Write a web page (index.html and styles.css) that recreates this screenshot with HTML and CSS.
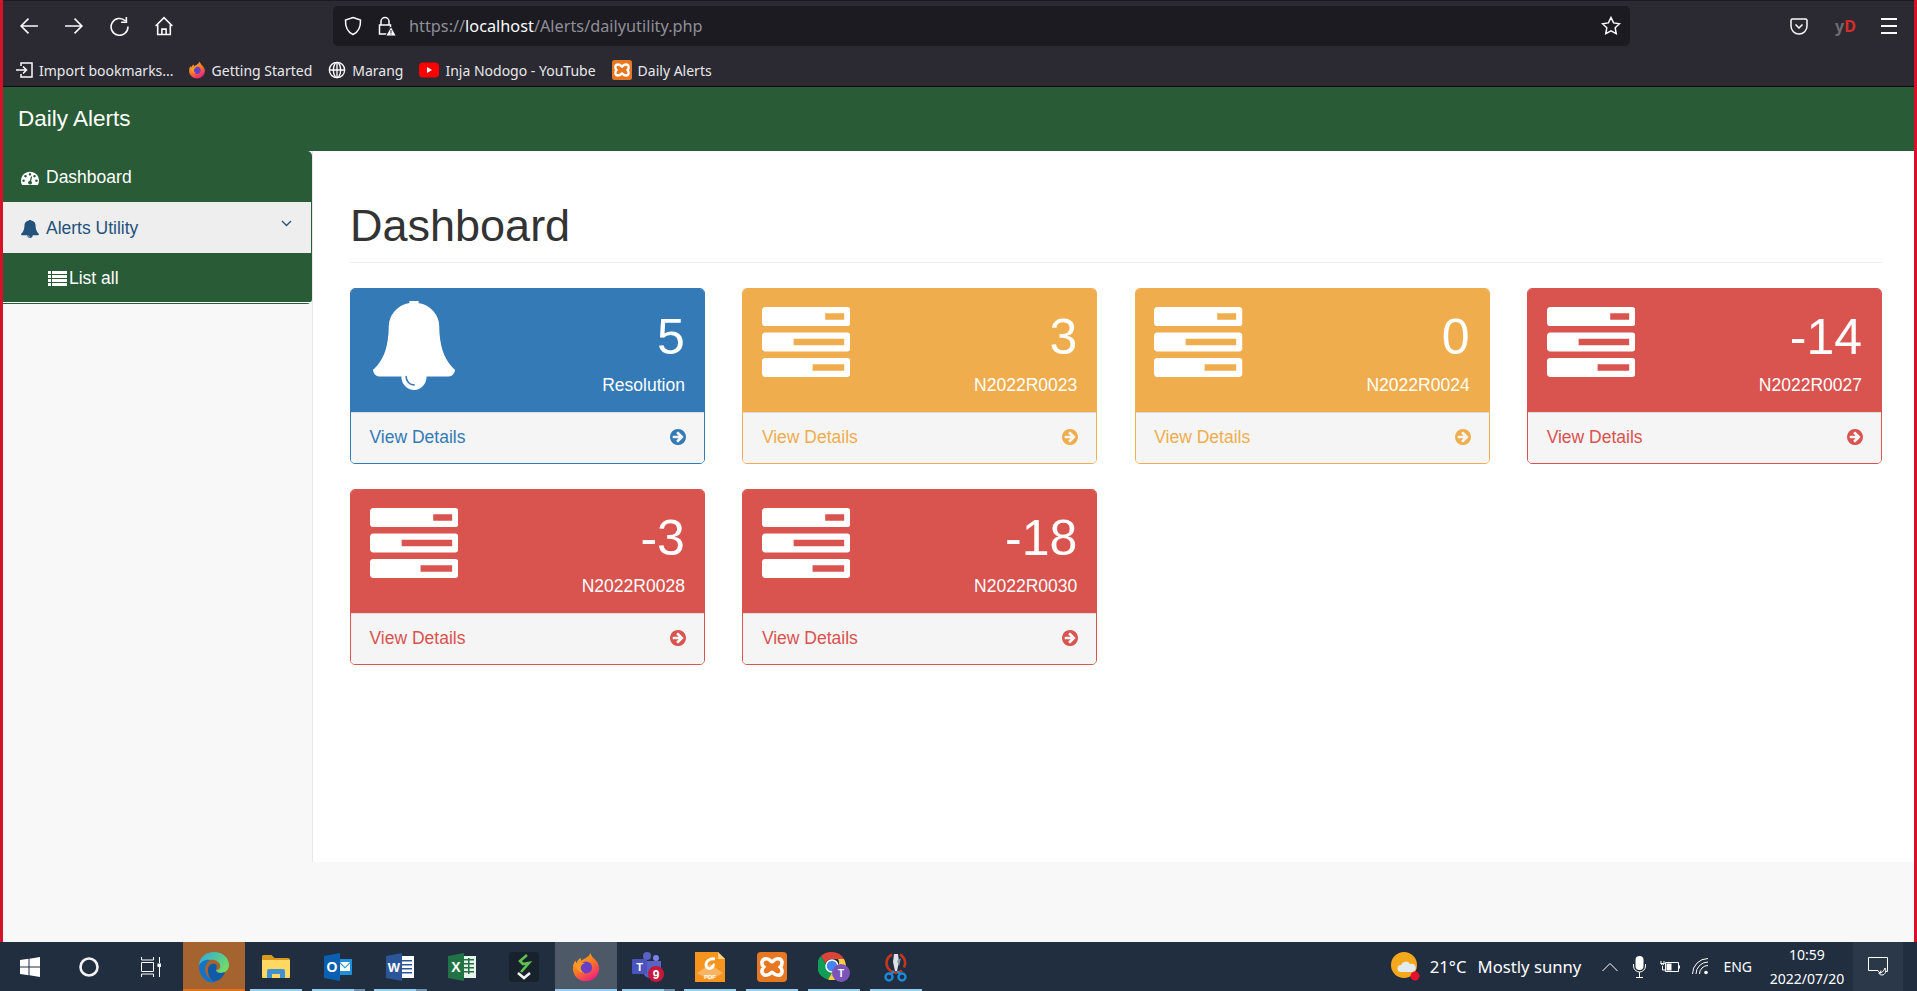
FILE: index.html
```html
<!DOCTYPE html>
<html lang="en">

<head>
    <meta charset="UTF-8">
    <meta name="viewport" content="width=device-width, initial-scale=1.0">
    <title>Daily Alerts</title>
    <link rel="stylesheet" href="styles.css">
</head>

<body>
    <!-- shared icons -->
    <svg class="defs" width="0" height="0">
        <defs>
            <linearGradient id="foxFire" x1="0" y1="0" x2="0.6" y2="1">
                <stop offset="0" stop-color="#ffbd2e" />
                <stop offset="0.55" stop-color="#ff7a1f" />
                <stop offset="1" stop-color="#f0257a" />
            </linearGradient>
            <linearGradient id="edgeWave" x1="0" y1="0" x2="1" y2="0.6">
                <stop offset="0" stop-color="#2ea7e0" />
                <stop offset="1" stop-color="#6fdc6a" />
            </linearGradient>
            <symbol id="fa-bell" viewBox="64 96 1664 1696" preserveAspectRatio="none">
                <path fill="currentColor" d="M912 1696q0-16-16-16-59 0-101.500-42.500t-42.500-101.500q0-16-16-16t-16 16q0 73 51.500 124.500t124.500 51.500q16 0 16-16zm816-288q0 52-38 90t-90 38h-448q0 106-75 181t-181 75-181-75-75-181h-448q-52 0-90-38t-38-90q50-42 91-88t85-119.500 74.500-158.500 50-206 19.500-260q0-152 117-282.500t307-158.500q-8-19-8-39 0-40 28-68t68-28 68 28 28 68q0 20-8 39 190 28 307 158.500t117 282.500q0 139 19.500 260t50 206 74.500 158.500 85 119.500 91 88z" />
            </symbol>
            <symbol id="fa-tasks" viewBox="0 128 1792 1408" preserveAspectRatio="none">
                <path fill="currentColor" d="M1024 1408h640v-128h-640v128zm-384-512h1024v-128h-1024v128zm640-512h384v-128h-384v128zm512 832v256q0 26-19 45t-45 19h-1664q-26 0-45-19t-19-45v-256q0-26 19-45t45-19h1664q26 0 45 19t19 45zm0-512v256q0 26-19 45t-45 19h-1664q-26 0-45-19t-19-45v-256q0-26 19-45t45-19h1664q26 0 45 19t19 45zm0-512v256q0 26-19 45t-45 19h-1664q-26 0-45-19t-19-45v-256q0-26 19-45t45-19h1664q26 0 45 19t19 45z" />
            </symbol>
            <symbol id="fa-arrow" viewBox="128 128 1536 1536">
                <path fill="currentColor" d="M1412 897q0-27-18-45l-91-91-362-362q-18-18-45-18t-45 18l-91 91q-18 18-18 45t18 45l189 189h-502q-26 0-45 19t-19 45v128q0 26 19 45t45 19h502l-189 189q-19 19-19 45t19 45l91 91q18 18 45 18t45-18l362-362 91-91q18-18 18-45zm252 0q0 209-103 385.500t-279.500 279.500-385.500 103-385.500-103-279.500-279.500-103-385.500 103-385.500 279.500-279.500 385.500-103 385.500 103 279.500 279.500 103 385.500z" />
            </symbol>
            <symbol id="firefox" viewBox="0 0 32 32">
                <path fill="url(#foxFire)" d="M16 31C7.700 31 2 24.800 2 17.500 2 14 3.200 11 4.800 9c.1 1.300.5 2.300 1.100 3 .7-2.600 2.400-4.600 4.700-5.600-.3 1.300 0 2.200.6 2.800C13 7.600 18.500 6 21 1c.5 3 2 4.800 4 6.500 3 2.500 5 6 5 10C30 24.800 24.300 31 16 31z" />
                <circle cx="16" cy="16.500" r="6.500" fill="#6b3fc4" />
                <path fill="#ff9a26" d="M4.500 13c3-2 7-2.500 10.500-1 -2.500.5-4 2-4.500 4 -.5 2.500 1 5 3.500 6-4 .5-8-2-9.500-9z" />
            </symbol>
            <symbol id="xampp" viewBox="0 0 20 20">
                <rect width="20" height="20" rx="2.500" fill="#e87722" />
                <path fill="none" stroke="#fff" stroke-width="2.400" d="M6 4.500C9 4.500 9 6.500 10 6.500S11 4.500 14 4.500C17 4.500 17.500 8 15.500 10 17.500 12 17 15.500 14 15.500 11 15.500 11 13.500 10 13.500S9 15.500 6 15.500C3 15.500 2.500 12 4.500 10 2.500 8 3 4.500 6 4.500z" />
            </symbol>
        </defs>
    </svg>

    <div class="window">
        <header class="browser">
            <div class="toolbar">
                <div class="nav-btns">
                    <svg class="tb-icon" viewBox="0 0 19 19"><path d="M18 9.500H2M9 2.500l-7 7 7 7" /></svg>
                    <svg class="tb-icon" viewBox="0 0 19 19"><path d="M1 9.500h16M10 2.500l7 7-7 7" /></svg>
                    <svg class="tb-icon" viewBox="0 0 19 19"><path d="M15.500 4.500a8 8 0 1 0 2.500 5.500M16.500 1v5h-5" /></svg>
                    <svg class="tb-icon" viewBox="0 0 19 19"><path d="M1.500 9.500L9.500 1.500l8 8M3.500 8v9.500h12V8M7.500 17.500v-5h4v5" /></svg>
                </div>
                <div class="urlbar">
                    <svg class="tb-icon shield" viewBox="0 0 20 20"><path d="M10 1.500l7.500 2.500c.3 7-2 12-7.500 14.500C4.500 16 2.200 11 2.500 4z" /></svg>
                    <svg class="lock" width="19" height="20" viewBox="0 0 19 20">
                        <path fill="none" stroke="#fbfbfe" stroke-width="1.500" d="M4 9V5.500a4 4 0 0 1 8 0V9M2.500 9h11v9h-11z" />
                        <path fill="#2b2a33" d="M8 20l5-9h2l4 9z" />
                        <path fill="#fbfbfe" d="M9.500 19.500l4.500-8 4.500 8z" />
                        <path fill="#2b2a33" d="M13.500 14h1v3h-1zM13.500 17.500h1v1h-1z" />
                    </svg>
                    <span class="url">https://<b>localhost</b>/Alerts/dailyutility.php</span>
                    <svg class="tb-icon star" viewBox="0 0 20 20"><path d="M10 1.500l2.600 5.400 5.900.8-4.300 4.100 1 5.900-5.200-2.800-5.200 2.800 1-5.900L1.500 7.700l5.900-.8z" /></svg>
                </div>
                <div class="actions">
                    <svg class="tb-icon pocket" viewBox="0 0 18 17"><path d="M2.500 1h13A1.500 1.500 0 0 1 17 2.500V8a8 8 0 0 1-16 0V2.500A1.500 1.500 0 0 1 2.500 1zM5.500 6.500L9 10l3.500-3.500" /></svg>
                    <span class="yd">y<em>D</em></span>
                    <div class="burger"><i></i><i></i><i></i></div>
                </div>
            </div>
            <div class="bookmarks">
                <a class="mark first">
                    <svg class="tb-icon" viewBox="0 0 18 18"><path d="M6 5V2h11v14H6v-3M1 9h10M8 5.500L11.500 9 8 12.500" /></svg>
                    Import bookmarks...
                </a>
                <a class="mark"><svg width="18" height="20"><use href="#firefox" /></svg>Getting Started</a>
                <a class="mark">
                    <svg class="tb-icon" viewBox="0 0 20 20"><circle cx="10" cy="10" r="8.500" /><ellipse cx="10" cy="10" rx="4" ry="8.500" /><path d="M1.500 10h17M10 1.500v17" /></svg>
                    Marang
                </a>
                <a class="mark">
                    <svg width="20" height="16" viewBox="0 0 20 16"><rect width="20" height="15" y="0.500" rx="4" fill="#f00" /><path d="M8 5l5 3-5 3z" fill="#fff" /></svg>
                    Inja Nodogo - YouTube
                </a>
                <a class="mark"><svg width="20" height="20"><use href="#xampp" /></svg>Daily Alerts</a>
            </div>
        </header>

        <nav class="topbar">
            <a class="brand">Daily Alerts</a>
        </nav>

        <div class="content">
            <aside class="sidebar">
                <ul class="side-menu">
                    <li class="side-item">
                        <svg class="side-icon" viewBox="0 128 1792 1408"><path fill="currentColor" d="M384 1152q0-53-37.500-90.500t-90.500-37.500-90.500 37.500-37.500 90.500 37.500 90.500 90.500 37.500 90.500-37.500 37.500-90.500zm192-448q0-53-37.500-90.500t-90.500-37.500-90.500 37.500-37.500 90.500 37.500 90.500 90.500 37.500 90.500-37.500 37.500-90.500zm428 481l101-382q6-26-7.500-48.500t-38.500-29.500-48 6.500-30 39.500l-101 382q-60 5-107 43.500t-63 98.500q-20 77 20 146t117 89 146-20 89-117q16-60-6-117t-72-91zm660-33q0-53-37.500-90.500t-90.500-37.500-90.500 37.500-37.500 90.500 37.500 90.500 90.500 37.500 90.500-37.500 37.500-90.500zm-640-640q0-53-37.500-90.500t-90.500-37.500-90.500 37.500-37.500 90.500 37.500 90.500 90.500 37.500 90.500-37.500 37.500-90.500zm448 192q0-53-37.500-90.500t-90.500-37.500-90.500 37.500-37.500 90.500 37.500 90.500 90.500 37.500 90.500-37.500 37.500-90.500zm320 448q0 261-141 483-19 29-54 29h-1402q-35 0-54-29-141-221-141-483 0-182 71-348t191-286 286-191 348-71 348 71 286 191 191 286 71 348z" /></svg>
                        Dashboard
                    </li>
                    <li class="side-item open">
                        <svg class="side-icon"><use href="#fa-bell" /></svg>
                        Alerts Utility
                        <svg class="chevron" viewBox="0 0 11 7"><path d="M1 1l4.500 4.500L10 1" /></svg>
                    </li>
                    <li class="side-item sub">
                        <svg class="list-icon" viewBox="0 0 19 15">
                            <path fill="currentColor" d="M0 0h3v3H0zM4 0h15v3H4zM0 4h3v3H0zM4 4h15v3H4zM0 8h3v3H0zM4 8h15v3H4zM0 12h3v3H0zM4 12h15v3H4z" />
                        </svg>
                        List all
                    </li>
                </ul>
            </aside>

            <main class="page">
                <h1 class="page-title">Dashboard</h1>
                <div class="cards">
                    <div class="card blue">
                        <div class="card-head">
                            <svg class="big-bell"><use href="#fa-bell" /></svg>
                            <div class="card-nums">
                                <div class="huge">5</div>
                                <div>Resolution</div>
                            </div>
                        </div>
                        <a class="card-foot">View Details<svg class="go"><use href="#fa-arrow" /></svg></a>
                    </div>
                    <div class="card yellow">
                        <div class="card-head">
                            <svg class="big-tasks"><use href="#fa-tasks" /></svg>
                            <div class="card-nums">
                                <div class="huge">3</div>
                                <div>N2022R0023</div>
                            </div>
                        </div>
                        <a class="card-foot">View Details<svg class="go"><use href="#fa-arrow" /></svg></a>
                    </div>
                    <div class="card yellow">
                        <div class="card-head">
                            <svg class="big-tasks"><use href="#fa-tasks" /></svg>
                            <div class="card-nums">
                                <div class="huge">0</div>
                                <div>N2022R0024</div>
                            </div>
                        </div>
                        <a class="card-foot">View Details<svg class="go"><use href="#fa-arrow" /></svg></a>
                    </div>
                    <div class="card red">
                        <div class="card-head">
                            <svg class="big-tasks"><use href="#fa-tasks" /></svg>
                            <div class="card-nums">
                                <div class="huge">-14</div>
                                <div>N2022R0027</div>
                            </div>
                        </div>
                        <a class="card-foot">View Details<svg class="go"><use href="#fa-arrow" /></svg></a>
                    </div>
                    <div class="card red">
                        <div class="card-head">
                            <svg class="big-tasks"><use href="#fa-tasks" /></svg>
                            <div class="card-nums">
                                <div class="huge">-3</div>
                                <div>N2022R0028</div>
                            </div>
                        </div>
                        <a class="card-foot">View Details<svg class="go"><use href="#fa-arrow" /></svg></a>
                    </div>
                    <div class="card red">
                        <div class="card-head">
                            <svg class="big-tasks"><use href="#fa-tasks" /></svg>
                            <div class="card-nums">
                                <div class="huge">-18</div>
                                <div>N2022R0030</div>
                            </div>
                        </div>
                        <a class="card-foot">View Details<svg class="go"><use href="#fa-arrow" /></svg></a>
                    </div>
                </div>
            </main>
        </div>
    </div>

    <footer class="taskbar">
        <div class="sys-btn">
            <svg width="20" height="20" viewBox="0 0 20 20"><path fill="#fff" d="M0 3l8.500-1.200v7.700H0zM9.500 1.700L20 0v9.500H9.500zM0 10.500h8.500v7.700L0 17zM9.500 10.500H20V20L9.500 18.300z" /></svg>
        </div>
        <div class="sys-btn">
            <svg width="20" height="20" viewBox="0 0 20 20"><circle cx="10" cy="10" r="8.500" fill="none" stroke="#f2f2f2" stroke-width="2.600" /></svg>
        </div>
        <div class="sys-btn wide">
            <svg width="20" height="20" viewBox="0 0 20 20"><path fill="none" stroke="#fff" d="M0.500 0v3h12V0M0.500 5.500h12v9h-12zM0.500 20v-3h12v3M18.500 0v6M18.500 10v10" /><rect x="16.500" y="6.500" width="4" height="3.500" fill="#fff" /></svg>
        </div>

        <div class="task-btn edge-on">
            <svg width="32" height="32" viewBox="0 0 32 32">
                <path fill="url(#edgeWave)" d="M1 15C1 6 8 1 16 1c9 0 15 6 15 13 0 5-4 8-8 8-3 0-5-1-5-3 3 0 5-2 4-5-1-4-6-6-10-5C6 10 2 12 1 15z" />
                <path fill="#1273c9" d="M1 15c2-5 7-7 11-6-3 2-5 5-5 9 0 6 5 11 11 13-2 .5-3 .5-4 .5C7 31.500 1 24 1 15z" />
                <path fill="#0f5ba8" d="M10 19c0-4 3-7 7-6 2 .5 2 3 1 6 0 3 4 4 9 2-2 6-7 10-12 9-3-2-5-6-5-11z" />
            </svg>
        </div>
        <div class="task-btn run">
            <svg width="28" height="24" viewBox="0 0 28 24">
                <path fill="#d99a1f" d="M0 1.500A1.500 1.500 0 0 1 1.500 0h8l3 3H26a2 2 0 0 1 2 2v4H0z" />
                <path fill="#ffd862" d="M0 5h28v17a1 1 0 0 1-1 1H1a1 1 0 0 1-1-1z" />
                <path fill="#3f92d2" d="M5 23v-7a2 2 0 0 1 2-2h14a2 2 0 0 1 2 2v7h-5v-4h-8v4z" />
            </svg>
        </div>
        <div class="task-btn run more">
            <svg width="28" height="28" viewBox="0 0 28 28">
                <rect x="14" y="6" width="14" height="16" fill="#1f8fd8" />
                <path fill="#fff" d="M16 9h10v9H16z" />
                <path fill="#1f8fd8" d="M16 9l5 5 5-5v1.500l-5 5-5-5z" />
                <path fill="#0a5fb0" d="M0 3l16-3v28L0 25z" />
                <text class="ms-letter" x="8" y="19" font-size="14">O</text>
            </svg>
        </div>
        <div class="task-btn run more">
            <svg width="28" height="28" viewBox="0 0 28 28">
                <rect x="13" y="3" width="15" height="22" fill="#fff" />
                <path fill="#2b579a" d="M15 7h11v1.500H15zM15 11h11v1.500H15zM15 15h11v1.500H15zM15 19h11v1.500H15z" />
                <path fill="#2b579a" d="M0 3l16-3v28L0 25z" />
                <text class="ms-letter" x="8" y="19" font-size="13">W</text>
            </svg>
        </div>
        <div class="task-btn">
            <svg width="28" height="28" viewBox="0 0 28 28">
                <rect x="13" y="3" width="15" height="22" fill="#e6f4ea" />
                <path fill="#217346" d="M15 6h11v1.500H15zM15 10h11v1.500H15zM15 14h11v1.500H15zM15 18h11v1.500H15zM20 5h1.500v16H20z" />
                <path fill="#217346" d="M0 3l16-3v28L0 25z" />
                <text class="ms-letter" x="8" y="19" font-size="14">X</text>
            </svg>
        </div>
        <div class="task-btn">
            <svg width="30" height="30" viewBox="0 0 30 30">
                <rect width="30" height="30" rx="3" fill="#17222c" />
                <path fill="none" stroke="#5fc24f" stroke-width="2.600" d="M18 3l-7 6 3 3 6-1-8 9" />
                <path fill="none" stroke="#f2f2f2" stroke-width="2.600" d="M9 21l6 5 6-5" />
            </svg>
        </div>
        <div class="task-btn run fox-on">
            <svg width="30" height="30"><use href="#firefox" /></svg>
        </div>
        <div class="task-btn run more">
            <svg width="32" height="30" viewBox="0 0 32 30">
                <circle cx="15" cy="4" r="4" fill="#5a62c4" />
                <circle cx="24" cy="6" r="3" fill="#7b83eb" />
                <path fill="#5a62c4" d="M11 9h18v10a7 7 0 0 1-7 7h-4a7 7 0 0 1-7-7z" />
                <rect y="7" width="15" height="15" rx="1" fill="#4b53bc" />
                <text class="ms-letter" x="7.500" y="19" font-size="11">T</text>
                <circle cx="24" cy="22" r="8" fill="#c4183c" />
                <text class="ms-letter" x="24" y="26.500" font-size="12">9</text>
            </svg>
        </div>
        <div class="task-btn run">
            <svg width="30" height="30" viewBox="0 0 30 30">
                <path fill="#f7941d" d="M0 0h23l7 7v23H0z" />
                <path fill="#fbd38d" d="M23 0l7 7h-7z" />
                <path fill="#fff" opacity="0.3" d="M2 21l13-9 13 9-13 7z" />
                <path fill="none" stroke="#fff" stroke-width="3" d="M20 7c-5-1-9 2-9 6 0 3 3 4 5 3 2-1 3-3 2-4" />
                <text class="ms-letter" x="15" y="27" font-size="6">PDF</text>
            </svg>
        </div>
        <div class="task-btn run">
            <svg width="30" height="30"><use href="#xampp" /></svg>
        </div>
        <div class="task-btn run">
            <svg width="32" height="30" viewBox="0 0 32 30">
                <path fill="#db4437" d="M14 0a14 14 0 0 1 12 7H14a7 7 0 0 0-6.500 4.500L3 4a14 14 0 0 1 11-4z" />
                <path fill="#0f9d58" d="M3 4l7 12a7 7 0 0 0 4 5l-4 6.500A14 14 0 0 1 3 4z" />
                <path fill="#ffcd40" d="M26 7a14 14 0 0 1-16 20.500l6-10a7 7 0 0 0 4-10.500z" />
                <circle cx="14" cy="14" r="6" fill="#4285f4" stroke="#fff" stroke-width="1.500" />
                <circle cx="23" cy="21" r="9" fill="#7c53b8" />
                <text class="ms-letter" x="23" y="25" font-size="10">T</text>
            </svg>
        </div>
        <div class="task-btn run">
            <svg width="26" height="30" viewBox="0 0 26 30">
                <path fill="none" stroke="#c8351d" stroke-width="2.600" d="M9 2.500a9.500 9.500 0 1 0 10 16" />
                <path fill="none" stroke="#c8351d" stroke-width="2.600" d="M17 2.500a9.500 9.500 0 0 1 4 13" />
                <path fill="#dfe3e8" d="M11 2h4l1 8-2 9h-2l-2-9z" />
                <path fill="#8e98a3" d="M14 9l4-3-2 8z" />
                <circle cx="6" cy="25" r="3.500" fill="none" stroke="#1b8ad8" stroke-width="2.400" />
                <circle cx="19" cy="25" r="3.500" fill="none" stroke="#1b8ad8" stroke-width="2.400" />
                <path fill="none" stroke="#1b8ad8" stroke-width="2.400" d="M8 22l3-3M17 22l-3-3" />
            </svg>
        </div>

        <div class="tray">
            <div class="weather">
                <svg width="29" height="29" viewBox="0 0 29 29">
                    <circle cx="13" cy="13" r="13" fill="#f6a81c" />
                    <path fill="#e2eaf2" d="M10 20a3.500 3.500 0 0 1 0-7 5 5 0 0 1 9-1 4 4 0 0 1 3 8z" />
                    <circle cx="24" cy="24" r="4.500" fill="#e8112d" />
                </svg>
                <span class="temp">21°C</span>
                <span>Mostly sunny</span>
            </div>
            <div class="tray-icons">
                <svg class="tray-icon caret" width="16" height="10" viewBox="0 0 16 10"><path d="M0.500 9L8 1.500 15.500 9" /></svg>
                <svg width="13" height="22" viewBox="0 0 13 22">
                    <rect x="2.500" width="8" height="14" rx="4" fill="#fff" />
                    <path fill="none" stroke="#fff" d="M0.500 8v2a6 6 0 0 0 12 0V8M6.500 16v5M3 21.500h7" />
                </svg>
                <svg class="tray-icon batt" width="20" height="14" viewBox="0 0 20 14"><path d="M5.500 2.500h13v9h-13zM19.500 5.500v3M0.500 3.500h4M1 1v3a2 2 0 0 0 3 0V1M2.500 6v4h3" /><rect x="6.500" y="3.500" width="5" height="7" fill="#fff" stroke="none" /></svg>
                <svg class="tray-icon" width="17" height="17" viewBox="0 0 17 17"><path d="M0.500 16A15.500 15.500 0 0 1 16 0.500M4 16A12 12 0 0 1 16 4M7.500 16A8.500 8.500 0 0 1 16 7.500" /><circle cx="14" cy="14.500" r="1.800" fill="#fff" stroke="none" /></svg>
                <span class="lang">ENG</span>
            </div>
            <div class="clock">
                <div>10:59</div>
                <div>2022/07/20</div>
            </div>
            <div class="notify">
                <svg class="tray-icon" width="20" height="19" viewBox="0 0 20 19"><path d="M0.500 0.500h19v14h-2.500M0.500 0.500v13h9.500l2 3 1-3" /><path d="M14 18c-2 0-3-1-3-2 3 0 5-2 6-5 2 3 0 7-3 7z" /></svg>
            </div>
        </div>
    </footer>
</body>

</html>
```

FILE: styles.css
```css
* {
    margin: 0;
    padding: 0;
    box-sizing: border-box;
}

html,
body {
    height: 100%;
    overflow: hidden;
}

body {
    font-family: "Liberation Sans", Arial, sans-serif;
    font-size: 17.5px;
    line-height: 25px;
    color: #333;
    background-color: #f8f8f8;
}

li {
    list-style: none;
}

.defs {
    position: absolute;
}

.window {
    height: 942px;
    display: flex;
    flex-direction: column;
    border-left: 3px solid #d8112a;
    border-right: 3px solid #d8112a;
}

/* browser chrome */
.browser {
    height: 87px;
    flex: none;
    background-color: #2b2a33;
    font-family: "Noto Sans", sans-serif;
    color: #fbfbfe;
    border-top: 1px solid #1c1b22;
    border-bottom: 1px solid #0c0c0d;
}

.tb-icon {
    fill: none;
    stroke: #fbfbfe;
    stroke-width: 1.5;
    flex: none;
}

.toolbar {
    height: 45px;
    display: flex;
    align-items: center;
    padding: 5px 0 0 16px;
}

.nav-btns {
    display: flex;
    gap: 25px;
    width: 155px;
}

.nav-btns .tb-icon {
    width: 20px;
    height: 20px;
}

.urlbar {
    width: 1297px;
    height: 40px;
    margin-left: 159px;
    display: flex;
    align-items: center;
    gap: 14px;
    padding: 0 9px 0 10px;
    border-radius: 5px;
    background-color: #1c1b22;
}

.shield,
.star {
    width: 20px;
    height: 20px;
}

.url {
    flex: 1;
    font-size: 16.300px;
    color: #8f8f96;
    margin-left: -1px;
}

.url b {
    font-weight: 400;
    color: #fbfbfe;
}

.actions {
    display: flex;
    align-items: center;
    gap: 27px;
    margin-left: 160px;
}

.pocket {
    width: 18px;
    height: 17px;
}

.yd {
    font-family: "Noto Sans", sans-serif;
    font-size: 16px;
    font-weight: 700;
    color: #6c6c70;
    width: 19px;
}

.yd em {
    font-style: normal;
    color: #d92a2a;
}

.burger {
    width: 16px;
    display: flex;
    flex-direction: column;
    gap: 5px;
}

.burger i {
    height: 2px;
    background-color: #fbfbfe;
}

.bookmarks {
    height: 40px;
    display: flex;
    align-items: center;
    gap: 16px;
    padding: 8px 0 0 12px;
    font-size: 14px;
    color: #e8e8ea;
}

.mark {
    display: flex;
    align-items: center;
    gap: 6px;
}

.mark.first {
    margin-right: -2px;
}

.mark .tb-icon {
    width: 18px;
    height: 18px;
}

/* site header */
.topbar {
    height: 64px;
    flex: none;
    display: flex;
    align-items: center;
    padding: 0 0 2px 15px;
    background-color: #295b36;
}

.brand {
    font-size: 22.500px;
    color: #fff;
}

.content {
    flex: 1;
    display: flex;
    background-color: #f8f8f8;
}

/* sidebar */
.sidebar {
    width: 309px;
    flex: none;
    background-color: #fff;
    height: 152px;
}

.side-menu {
    background-color: #295b36;
    border-right: 1px solid #295b36;
    border-radius: 0 5px 5px 0;
    padding-bottom: 1px;
}

.side-item {
    height: 51px;
    display: flex;
    align-items: center;
    gap: 7px;
    padding: 2px 0 0 18px;
    color: #fff;
}

.side-item.open {
    position: relative;
    color: #23527c;
    background-color: #eee;
}

.side-item.sub {
    height: 50px;
    padding-left: 45px;
    gap: 2px;
    border-bottom: 1px solid #fff;
}

.side-icon {
    width: 18px;
    height: 15px;
    flex: none;
}

.open .side-icon {
    height: 18px;
}

.list-icon {
    width: 19px;
    height: 15px;
}

.chevron {
    position: absolute;
    right: 19px;
    top: 18px;
    width: 11px;
    height: 7px;
    fill: none;
    stroke: currentColor;
    stroke-width: 1.300;
}

/* main page */
.page {
    flex: 1;
    height: 711px;
    padding: 0 32px 0 37px;
    background-color: #fff;
    border-left: 1px solid #e7e7e7;
}

.page-title {
    margin-top: 50px;
    padding-bottom: 11px;
    font-size: 45px;
    font-weight: 400;
    line-height: 49.500px;
    border-bottom: 1px solid #eee;
    color: #333;
}

.cards {
    margin-top: 25px;
    display: grid;
    grid-template-columns: repeat(4, 1fr);
    gap: 25px 37.5px;
}

.card {
    height: 176px;
    display: flex;
    flex-direction: column;
    border: 1px solid;
    border-radius: 5px;
    overflow: hidden;
}

.blue {
    --tone: #337ab7;
}

.yellow {
    --tone: #f0ad4e;
}

.red {
    --tone: #d9534f;
}

.card {
    border-color: var(--tone);
}

.card-head {
    height: 123px;
    flex: none;
    display: flex;
    justify-content: space-between;
    padding: 12px 19px 0 18.500px;
    color: #fff;
    background-color: var(--tone);
}

.big-bell {
    width: 82px;
    height: 89px;
    margin-left: 3px;
    color: #fff;
}

.big-tasks {
    width: 88.500px;
    height: 70px;
    margin-top: 6px;
    color: #fff;
}

.card-nums {
    margin-top: 1px;
    text-align: right;
}

.huge {
    font-size: 50px;
    line-height: 71px;
}

.card-foot {
    flex: 1;
    display: flex;
    justify-content: space-between;
    align-items: center;
    padding: 0 18px 0 18.500px;
    color: var(--tone);
    background-color: #f5f5f5;
    border-top: 1px solid #ddd;
}

.go {
    width: 16px;
    height: 16px;
    margin-bottom: 2px;
}

/* windows taskbar */
.taskbar {
    height: 49px;
    display: flex;
    background-color: #212e40;
    font-family: "Noto Sans", sans-serif;
    color: #fff;
}

.sys-btn {
    width: 59px;
    flex: none;
    display: flex;
    align-items: center;
    justify-content: center;
}

.sys-btn.wide {
    width: 65px;
}

.task-btn {
    width: 62px;
    flex: none;
    display: flex;
    align-items: center;
    justify-content: center;
    position: relative;
}

.task-btn.run::after {
    content: "";
    position: absolute;
    left: 5px;
    right: 5px;
    bottom: 0;
    height: 2px;
    background-color: #99cdf0;
}

.task-btn.more::after {
    right: 15px;
    box-shadow: 11px 0 0 #6b90ad;
}

.edge-on {
    background-color: #a5642f;
    border-bottom: 2px solid #e8701a;
    padding-top: 2px;
}

.fox-on {
    background-color: #4d5966;
}

.task-btn.fox-on::after {
    left: 0;
    right: 0;
}

.ms-letter {
    font-family: "Liberation Sans", sans-serif;
    font-weight: 700;
    fill: #fff;
    text-anchor: middle;
}

.tray {
    margin-left: auto;
    display: flex;
    align-items: center;
}

.weather {
    display: flex;
    align-items: center;
    font-size: 16.700px;
    white-space: nowrap;
}

.temp {
    margin: 0 11px 0 10px;
}

.tray-icons {
    display: flex;
    align-items: center;
    gap: 14px;
    margin-left: 21px;
}

.caret {
    margin-right: 1px;
}

.batt {
    margin-right: -2px;
}

.tray-icon {
    fill: none;
    stroke: #fff;
    flex: none;
}

.lang {
    font-size: 14px;
}

.clock {
    width: 84px;
    margin-left: 13px;
    font-size: 14px;
    line-height: 24px;
    text-align: center;
}

.notify {
    width: 50px;
    height: 49px;
    margin: 0 14px 0 4px;
    display: flex;
    align-items: center;
    justify-content: center;
    background-color: #2b3849;
}
```
